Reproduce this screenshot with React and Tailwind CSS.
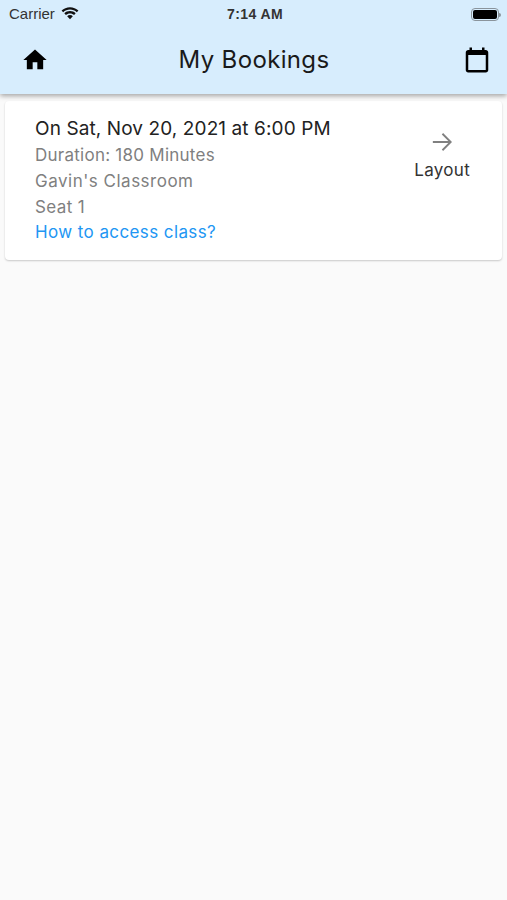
const poppins = { fontFamily: 'Inter, "Open Sans", sans-serif' };

function StatusBar() {
    return (
        <div className="flex items-center justify-between h-[28px] pl-[9px] pr-[6px] pt-[1px] font-['Liberation_Sans',sans-serif] text-[14px] text-[#222]">
            <div className="flex items-center gap-[5px] w-[120px]">
                <span className="text-[15px] text-[#333]">Carrier</span>
                <svg width="20" height="15" viewBox="0 0 19 14" className="-mt-[3px]">
                    <path d="M9.5 3.2c2.5 0 4.8 1 6.5 2.6l1.5-1.6C15.4 2.2 12.6 1 9.5 1S3.6 2.2 1.500 4.200L3 5.800C4.700 4.200 7 3.200 9.500 3.200z" fill="#111" />
                    <path d="M9.500 6.900c1.500 0 2.900.6 3.900 1.500l1.500-1.600C13.500 5.500 11.600 4.700 9.500 4.700S5.500 5.500 4.100 6.800l1.500 1.600c1-.9 2.400-1.500 3.900-1.500z" fill="#111" />
                    <path d="M9.500 8.500c-1.100 0-2 .4-2.700 1.100l2.700 2.900 2.700-2.900c-.7-.7-1.600-1.100-2.700-1.100z" fill="#111" />
                </svg>
            </div>
            <span className="font-bold text-[14px] tracking-[0.4px] text-[#333]">7:14 AM</span>
            <div className="flex items-center justify-end w-[120px]">
                <div className="flex items-center justify-center w-[28px] h-[13px] rounded-[4px] border border-[#8a949c]">
                    <div className="w-[24px] h-[9px] rounded-[2px] bg-black" />
                </div>
                <div className="w-[2px] h-[4px] rounded-r-sm bg-[#8a949c]" />
            </div>
        </div>
    );
}

function Header() {
    return (
        <div className="flex items-center justify-between h-[66px] pl-[23px] pr-[15px] pb-[2px]">
            <svg width="28" height="28" viewBox="0 0 24 24" className="-ml-[2px]" fill="black">
                <path d="M10 20v-6h4v6h5v-8h3L12 3 2 12h3v8z" />
            </svg>
            <h1 className="text-[24px] text-[#1a1a1a] tracking-[0.35px] -ml-[3px]" style={poppins}>My Bookings</h1>
            <svg width="30" height="30" viewBox="0 0 24 24" fill="black">
                <path d="M19 4h-1V2h-2v2H8V2H6v2H5c-1.110 0-2 .9-2 2v14c0 1.100.9 2 2 2h14c1.100 0 2-.9 2-2V6c0-1.100-.9-2-2-2zm0 16H5V8h14v12z" />
            </svg>
        </div>
    );
}

export default function App() {
    return (
        <div className="min-h-[900px] bg-[#fafafa]" style={poppins}>
            <div className="h-[94px] bg-[#d7edfd] shadow-[0_2px_5px_rgba(0,0,0,0.35)] relative">
                <StatusBar />
                <Header />
            </div>
            <div className="mx-[5px] mt-[7px] h-[159px] flex justify-between rounded-[4px] bg-white shadow-[0_1px_2px_rgba(0,0,0,0.2)] pl-[30px] pr-[32px] pt-[15px]">
                <div className="flex flex-col">
                    <p className="text-[19px] leading-[26px] text-[#222] tracking-[0.1px]">On Sat, Nov 20, 2021 at 6:00 PM</p>
                    <p className="text-[17px] leading-[26px] text-[#808080] tracking-[0.25px]">Duration: 180 Minutes</p>
                    <p className="text-[17px] leading-[26px] text-[#808080] tracking-[0.5px]">Gavin's Classroom</p>
                    <p className="text-[17px] leading-[26px] text-[#808080] tracking-[0.4px]">Seat 1</p>
                    <p className="text-[17px] leading-[25px] text-[#2196f3] tracking-[0.4px]">How to access class?</p>
                </div>
                <div className="flex flex-col items-center pt-[14px]">
                    <svg width="22" height="24" viewBox="0 0 24 24" fill="none" stroke="#808080" strokeWidth="2">
                        <path d="M2 12h19M12.500 3l9 9-9 9" />
                    </svg>
                    <span className="text-[17px] leading-[26px] text-[#333] mt-[3px] tracking-[0.3px]">Layout</span>
                </div>
            </div>
        </div>
    );
}
